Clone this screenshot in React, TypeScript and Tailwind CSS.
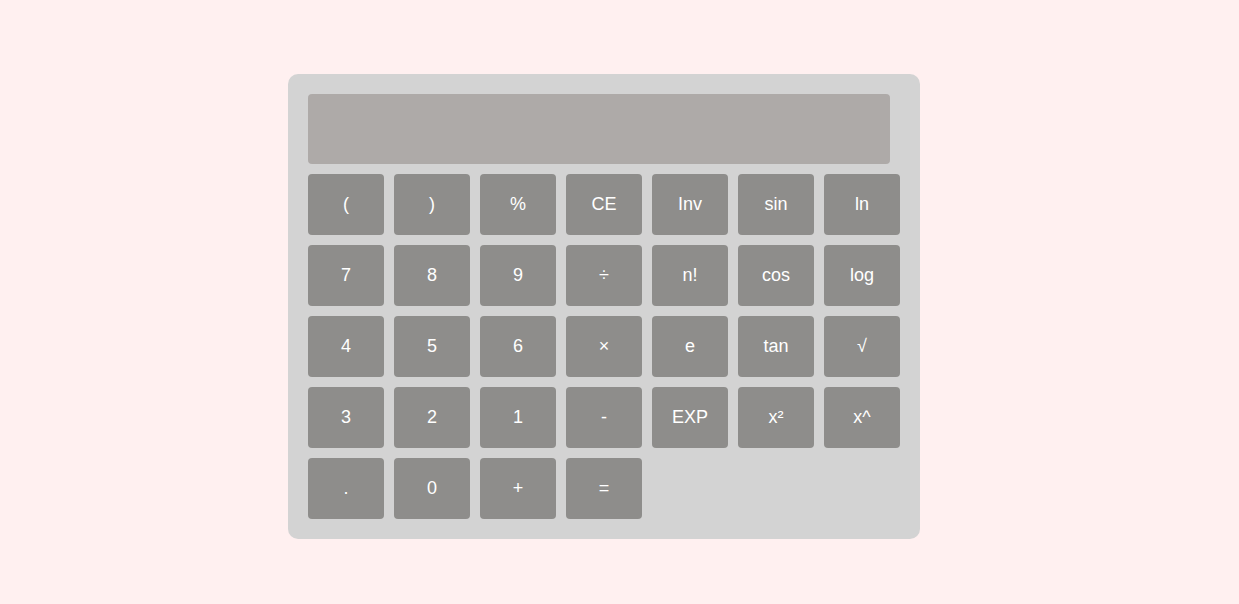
const keys = [
  "(", ")", "%", "CE", "Inv", "sin", "ln",
  "7", "8", "9", "÷", "n!", "cos", "log",
  "4", "5", "6", "×", "e", "tan", "√",
  "3", "2", "1", "-", "EXP", "x²", "x^",
  ".", "0", "+", "=",
];

export default function App() {
  return (
    <div className="min-h-[604px] w-full bg-[#fff0f0] pl-[288px] pt-[74px] font-['Liberation_Sans',Arial,sans-serif]">
      <div className="flex w-[632px] flex-col gap-[10px] rounded-[10px] bg-[#d3d3d3] p-5">
        <div className="h-[70px] w-[582px] rounded-[4px] bg-[#aeaaa8]" />
        <div className="grid grid-cols-[repeat(7,76px)] gap-[10px]">
          {keys.map((k) => (
            <button
              key={k}
              type="button"
              className="flex h-[61px] items-center justify-center rounded-[4px] bg-[#8e8d8b] text-[18px] text-white"
            >
              {k}
            </button>
          ))}
        </div>
      </div>
    </div>
  );
}
